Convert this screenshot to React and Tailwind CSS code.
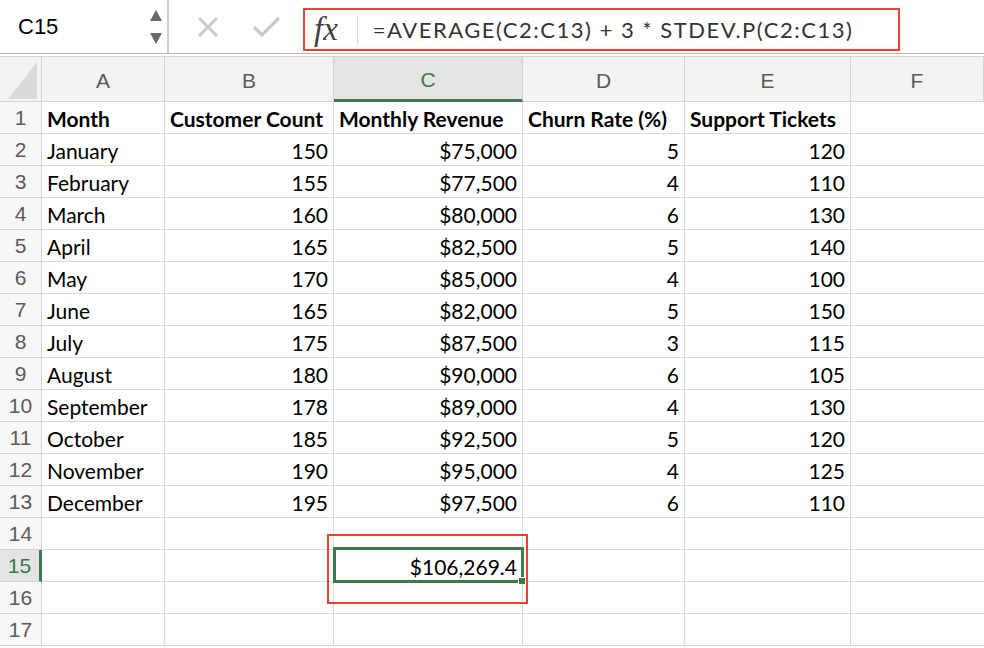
import React from 'react';

const cols = ['A', 'B', 'C', 'D', 'E', 'F'];

const rows = [
  ['Month', 'Customer Count', 'Monthly Revenue', 'Churn Rate (%)', 'Support Tickets'],
  ['January', '150', '$75,000', '5', '120'],
  ['February', '155', '$77,500', '4', '110'],
  ['March', '160', '$80,000', '6', '130'],
  ['April', '165', '$82,500', '5', '140'],
  ['May', '170', '$85,000', '4', '100'],
  ['June', '165', '$82,000', '5', '150'],
  ['July', '175', '$87,500', '3', '115'],
  ['August', '180', '$90,000', '6', '105'],
  ['September', '178', '$89,000', '4', '130'],
  ['October', '185', '$92,500', '5', '120'],
  ['November', '190', '$95,000', '4', '125'],
  ['December', '195', '$97,500', '6', '110'],
  ['', '', '', '', ''],
  ['', '', '$106,269.4', '', ''],
  ['', '', '', '', ''],
  ['', '', '', '', ''],
];

const cellFont = { fontFamily: 'Lato, "Liberation Sans", sans-serif' };
const headFont = { fontFamily: '"Liberation Sans", sans-serif' };

const FormulaBar = () => (
  <div className="flex h-[54px] border-b border-[#b9b9b9] bg-white">
    {/* name box */}
    <div className="relative flex w-[169px] items-center border-r-2 border-[#cfcfcf] pl-[18px]">
      <span className="text-[22px] text-black" style={headFont}>C15</span>
      <svg className="absolute right-[4px] top-[8px]" width="14" height="38" viewBox="0 0 14 38">
        <path d="M1 13 L7 2 L13 13 Z" fill="#6a6a6a" />
        <path d="M1 25 L7 36 L13 25 Z" fill="#6a6a6a" />
      </svg>
    </div>
    <div className="flex w-[134px] items-center">
      <svg className="ml-[27px]" width="24" height="24" viewBox="0 0 24 24">
        <path d="M3 3 L21 21 M21 3 L3 21" stroke="#cacaca" strokeWidth="3" fill="none" />
      </svg>
      <svg className="ml-[32px]" width="30" height="24" viewBox="0 0 30 24">
        <path d="M2 12 L10 20 L27 3" stroke="#cacaca" strokeWidth="3.2" fill="none" />
      </svg>
    </div>
    {/* fx + formula */}
    <div className="mt-[8px] flex h-[43px] w-[597px] items-center border-2 border-[#e8432d]">
      <span
        className="ml-[9px] text-[33px] italic leading-none text-[#3f3f3f]"
        style={{ fontFamily: '"Liberation Serif", serif' }}
      >
        fx
      </span>
      <div className="ml-[19px] h-[28px] w-px bg-[#d8d8d8]" />
      <span className="ml-[15px] text-[22px] tracking-[1.5px] text-[#333]" style={cellFont}>
        =AVERAGE(C2:C13) + 3 * STDEV.P(C2:C13)
      </span>
    </div>
  </div>
);

const Grid = () => (
  <div className="relative mt-[2px]">
    <div
      className="grid grid-cols-[42px_123px_169px_189px_162px_166px_133px]"
      style={cellFont}
    >
      {/* header row */}
      <div className="relative h-[46px] border-t border-r border-b border-[#d3d3d3] bg-[#f3f3f3]">
        <svg className="absolute left-[8px] top-[5px]" width="30" height="37" viewBox="0 0 30 37">
          <path d="M0 37 L29 0 L29 37 Z" fill="#d9d9d9" />
        </svg>
      </div>
      {cols.map((c) => (
        <div
          key={c}
          className={
            c === 'C'
              ? 'flex h-[46px] items-center justify-center border-t border-r border-b-[3px] border-[#d3d3d3] border-b-[#3b7a4c] bg-[#e4e4e4] text-[21px] text-[#3b7a4c]'
              : 'flex h-[46px] items-center justify-center border-t border-r border-b border-[#d3d3d3] bg-[#f3f3f3] text-[21px] text-[#5b5b5b]'
          }
          style={headFont}
        >
          <span className="mt-[4px]">{c}</span>
        </div>
      ))}

      {rows.map((r, i) => (
        <React.Fragment key={i}>
          <div
            className={
              i === 14
                ? 'flex h-[32px] items-center justify-center border-r-[3px] border-b border-[#d3d3d3] border-r-[#3b7a4c] bg-[#e4e4e4] text-[21px] text-[#3b7a4c]'
                : 'flex h-[32px] items-center justify-center border-r border-b border-[#d3d3d3] bg-[#f7f7f7] text-[21px] text-[#5b5b5b]'
            }
            style={headFont}
          >
            {i + 1}
          </div>
          {r.map((v, j) => (
            <div
              key={j}
              className={
                'flex h-[32px] items-center overflow-hidden whitespace-nowrap border-r border-b border-[#d9d9d9] bg-white px-[5px] text-[21px] text-black ' +
                (i === 0 ? 'font-bold ' : '') +
                (i > 0 && j > 0 ? 'justify-end' : 'justify-start')
              }
            >
              <span className="mt-[2px]">{v}</span>
            </div>
          ))}
          <div className="h-[32px] border-b border-[#d9d9d9] bg-white" />
        </React.Fragment>
      ))}
    </div>

    {/* active cell C15 */}
    <div className="pointer-events-none absolute left-[333px] top-[491px] h-[36px] w-[191px] border-[3px] border-[#3b7a4c]">
      <div className="absolute -bottom-[5px] -right-[5px] h-[8px] w-[8px] border border-white bg-[#3b7a4c]" />
    </div>
    {/* annotation box */}
    <div className="pointer-events-none absolute left-[327px] top-[478px] h-[70px] w-[201px] border-2 border-[#e8432d]" />
  </div>
);

const App = () => (
  <div className="h-[648px] w-[984px] overflow-hidden bg-white">
    <FormulaBar />
    <Grid />
  </div>
);

export default App;
